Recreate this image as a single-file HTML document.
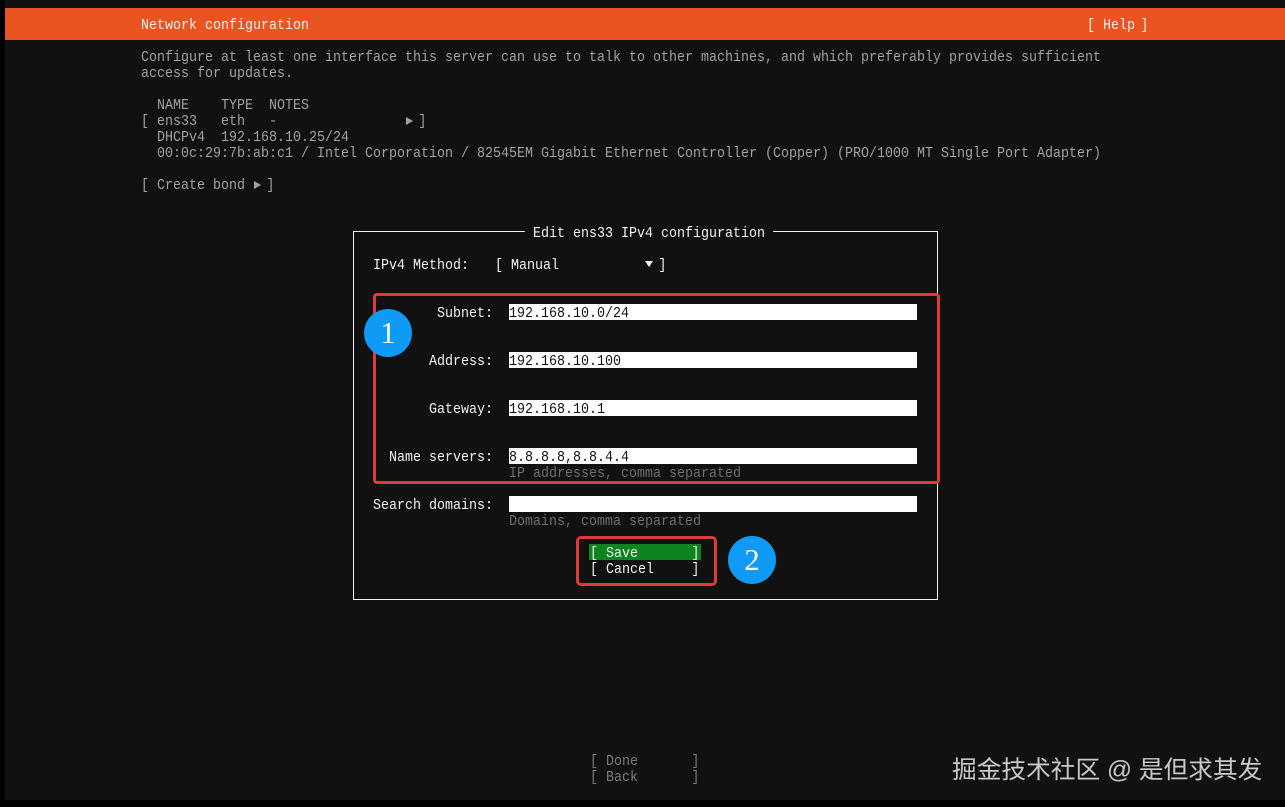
<!DOCTYPE html>
<html>
<head>
<meta charset="utf-8">
<style>
html,body{margin:0;padding:0;background:#000;}
#s{position:relative;width:1285px;height:807px;overflow:hidden;background:#000;}
#bg{position:absolute;left:5px;top:0;width:1280px;height:800px;background:#111112;}
.t{position:absolute;white-space:pre;font-family:"Liberation Mono",monospace;font-size:15px;line-height:16px;height:16px;color:#a2a2a2;margin-top:1px;transform:scaleX(.8887);transform-origin:0 0;}
.t i{font-style:normal;position:relative;left:-3px;}
.w{color:#f2f2f2;}
.k{color:#111;}
.g{color:#6f6f6f;}
.f{color:#7a7a7a;}
.b{position:absolute;}
.c{position:absolute;width:48px;height:48px;border-radius:50%;background:#0f9bf5;color:#fff;font-family:"Liberation Serif",serif;font-size:31px;line-height:48px;text-align:center;}
.tri{position:absolute;width:0;height:0;}
</style>
</head>
<body>
<div id="s">
<div id="bg"></div>
<div class="b" style="left:5px;top:8px;width:1280px;height:32px;background:#e95420;"></div>
<div class="t w" style="left:141px;top:17px;">Network configuration</div>
<div class="t w" style="left:1087px;top:17px;">[ Help <i>]</i></div>

<div class="t" style="left:141px;top:49px;">Configure at least one interface this server can use to talk to other machines, and which preferably provides sufficient</div>
<div class="t" style="left:141px;top:65px;">access for updates.</div>
<div class="t" style="left:157px;top:97px;">NAME    TYPE  NOTES</div>
<div class="t" style="left:141px;top:113px;">[ ens33   eth   -               </div>
<div class="tri" style="left:406px;top:117px;border-left:7px solid #a2a2a2;border-top:4px solid transparent;border-bottom:4px solid transparent;"></div>
<div class="t" style="left:421px;top:113px;"><i>]</i></div>
<div class="t" style="left:157px;top:129px;">DHCPv4  192.168.10.25/24</div>
<div class="t" style="left:157px;top:145px;">00:0c:29:7b:ab:c1 / Intel Corporation / 82545EM Gigabit Ethernet Controller (Copper) (PRO/1000 MT Single Port Adapter)</div>
<div class="t" style="left:141px;top:177px;">[ Create bond</div>
<div class="tri" style="left:254px;top:181px;border-left:7px solid #a2a2a2;border-top:4px solid transparent;border-bottom:4px solid transparent;"></div>
<div class="t" style="left:269px;top:177px;"><i>]</i></div>

<div class="b" style="left:353px;top:231px;width:583px;height:367px;border:1px solid #f2f2f2;"></div>
<div class="b" style="left:525px;top:228px;width:248px;height:8px;background:#111112;"></div>
<div class="t w" style="left:533px;top:225px;">Edit ens33 IPv4 configuration</div>

<div class="t w" style="left:373px;top:257px;">IPv4 Method:</div>
<div class="t w" style="left:495px;top:257px;">[ Manual</div>
<div class="tri" style="left:645px;top:261px;border-top:6px solid #f2f2f2;border-left:4px solid transparent;border-right:4px solid transparent;"></div>
<div class="t w" style="left:661px;top:257px;"><i>]</i></div>

<div class="t w" style="left:437px;top:305px;">Subnet:</div>
<div class="b" style="left:509px;top:304px;width:408px;height:16px;background:#fff;"></div>
<div class="t k" style="left:509px;top:305px;">192.168.10.0/24</div>

<div class="t w" style="left:429px;top:353px;">Address:</div>
<div class="b" style="left:509px;top:352px;width:408px;height:16px;background:#fff;"></div>
<div class="t k" style="left:509px;top:353px;">192.168.10.100</div>

<div class="t w" style="left:429px;top:401px;">Gateway:</div>
<div class="b" style="left:509px;top:400px;width:408px;height:16px;background:#fff;"></div>
<div class="t k" style="left:509px;top:401px;">192.168.10.1</div>

<div class="t w" style="left:389px;top:449px;">Name servers:</div>
<div class="b" style="left:509px;top:448px;width:408px;height:16px;background:#fff;"></div>
<div class="t k" style="left:509px;top:449px;">8.8.8.8,8.8.4.4</div>
<div class="t g" style="left:509px;top:465px;">IP addresses, comma separated</div>

<div class="t w" style="left:373px;top:497px;">Search domains:</div>
<div class="b" style="left:509px;top:496px;width:408px;height:16px;background:#fff;"></div>
<div class="t g" style="left:509px;top:513px;">Domains, comma separated</div>

<div class="b" style="left:589px;top:544px;width:112px;height:16px;background:#0e8420;"></div>
<div class="t w" style="left:590px;top:545px;">[ Save       <i>]</i></div>
<div class="t w" style="left:590px;top:561px;">[ Cancel     <i>]</i></div>

<div class="b" style="left:373px;top:293px;width:561px;height:185px;border:3px solid #dd3b3b;border-radius:4px;"></div>
<div class="b" style="left:576px;top:536px;width:135px;height:44px;border:3px solid #dd3b3b;border-radius:5px;"></div>
<div class="c" style="left:364px;top:309px;">1</div>
<div class="c" style="left:728px;top:536px;">2</div>

<div class="t f" style="left:590px;top:753px;">[ Done       <i>]</i></div>
<div class="t f" style="left:590px;top:769px;">[ Back       <i>]</i></div>

<div style="position:absolute;left:952px;top:755px;white-space:pre;font-family:'Liberation Sans','Noto Sans CJK SC',sans-serif;font-size:24.7px;line-height:32px;color:#c9c9c9;">掘金技术社区 @ 是但求其发</div>
</div>
</body>
</html>
